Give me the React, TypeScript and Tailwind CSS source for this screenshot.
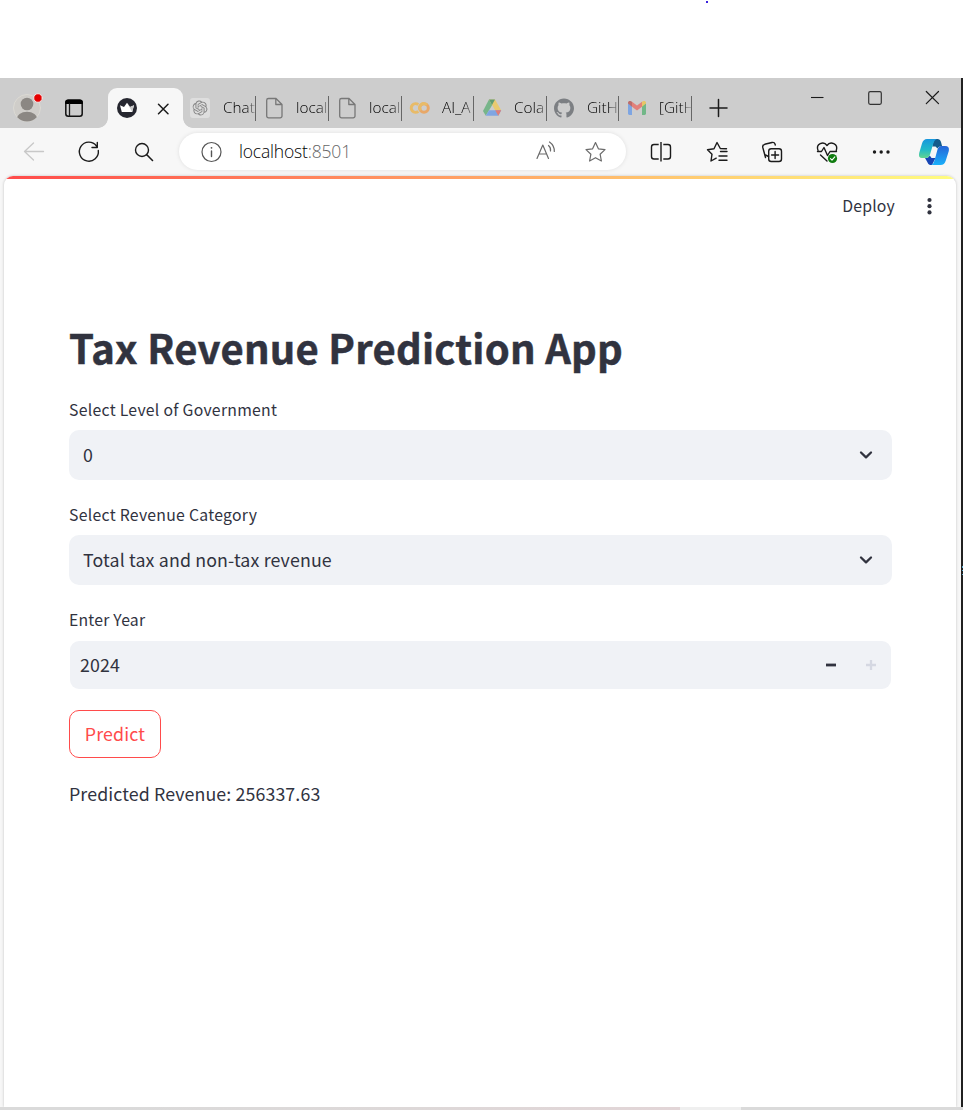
import type { ReactNode } from "react";

const SOURCE = "font-['Noto_Sans_CJK_SC','Noto_Sans',sans-serif]";
const CHROME = "font-['Open_Sans','Noto_Sans',sans-serif]";

/* Drawings share the window's coordinate system: x and y are the cell's origin. */
function Cell({ x, y, w, h, children }: { x: number; y: number; w: number; h: number; children: ReactNode }) {
  return (
    <svg
      width={w}
      height={h}
      viewBox={`${x} ${y} ${w} ${h}`}
      fill="none"
      stroke="#1b1b1b"
      strokeWidth="1.4"
      strokeLinecap="round"
      strokeLinejoin="round"
      className="block shrink-0"
    >
      {children}
    </svg>
  );
}

const Strip = ({ x, w, children }: { x: number; w: number; children: ReactNode }) => (
  <Cell x={x} y={78} w={w} h={50}>{children}</Cell>
);
const Tool = ({ x, w, children }: { x: number; w: number; children: ReactNode }) => (
  <Cell x={x} y={128} w={w} h={48}>{children}</Cell>
);

function Tab({ label, wide, children }: { label: string; wide?: boolean; children: ReactNode }) {
  return (
    <div className={`flex h-[50px] shrink-0 items-center ${wide ? "w-[73px]" : "w-[72px]"}`}>
      {children}
      <div className="mt-[11px] flex h-[25px] min-w-0 flex-1 items-center overflow-hidden border-r border-[#666] pb-[2px] pl-[8px]">
        <span className="block w-full whitespace-nowrap bg-[linear-gradient(90deg,#000_70%,#888_100%)] bg-clip-text text-[15.3px] leading-[23px] font-light text-transparent">
          {label}
        </span>
      </div>
    </div>
  );
}

function PageIcon() {
  return (
    <Cell x={-1.5} y={0} w={32} h={50}>
      <path d="M11 20.500h7.500l6 6V38a1.800 1.800 0 0 1-1.800 1.800H11A1.800 1.800 0 0 1 9.200 38V22.300A1.800 1.800 0 0 1 11 20.500ZM18.300 20.800V26.500h6" stroke="#777" strokeWidth="1.300" />
    </Cell>
  );
}

function TabStrip() {
  return (
    <div className="flex h-[50px] bg-[#cdcdcd]">
      <Strip x={0} w={54}>
        <clipPath id="face"><circle cx="27" cy="108" r="13.500" /></clipPath>
        <circle cx="27" cy="108" r="13.500" fill="#cfcdc9" stroke="#dcdad4" strokeWidth="1" />
        <g clipPath="url(#face)" fill="#8b8783" stroke="none">
          <circle cx="27" cy="104" r="6.300" />
          <ellipse cx="27" cy="119.500" rx="10.500" ry="7.700" />
        </g>
        <circle cx="38" cy="98" r="4.300" fill="#e60000" stroke="#f4e4e4" strokeWidth="1" />
      </Strip>
      <Strip x={54} w={54}>
        <rect x="65.800" y="100.200" width="16.400" height="16" rx="2.500" strokeWidth="1.500" stroke="#111" />
        <path d="M65.800 103.500V102.500Q65.800 100 68.300 100H79.700Q82.200 100 82.200 102.500V103.500Z" fill="#000" stroke="#000" strokeWidth="1.200" />
        <path d="M69.500 104V116" strokeWidth="1.300" />
      </Strip>
      <div className="relative mt-[10px] h-[40px] w-[75px] shrink-0 rounded-t-[9px] bg-[#f7f7f7]">
        <span className="absolute bottom-0 -left-[10px] size-[10px] bg-[radial-gradient(circle_at_0_0,transparent_9.500px,#f7f7f7_10.200px)]" />
        <span className="absolute -right-[10px] bottom-0 size-[10px] bg-[radial-gradient(circle_at_100%_0,transparent_9.500px,#f7f7f7_10.200px)]" />
        <Cell x={108} y={88} w={75} h={40}>
          <circle cx="127" cy="108" r="10" fill="#262730" stroke="none" />
          <path d="M120 105.200L124 107L127 102.800L130 107L134 105.200L132.200 112H121.800Z" fill="#fff" stroke="none" />
          <path d="M127 102.800L130 107L134 105.200L132.200 112Z" fill="#c9c9c9" stroke="none" />
          <path d="M158.500 104.300L168 113.700M168 104.300L158.500 113.700" strokeWidth="1.500" />
        </Cell>
      </div>
      <div className={`flex ${CHROME}`}>
        <Tab label="Chat" wide>
          <Cell x={183} y={78} w={32} h={50}>
            <rect x="190" y="98" width="20" height="20" rx="3" fill="#dedede" stroke="none" />
            <g transform="translate(192.500 100.500) scale(.625)" fill="#858585" stroke="none">
              <path d="M22.2819 9.8211a5.9847 5.9847 0 0 0-.5157-4.9108 6.0462 6.0462 0 0 0-6.5098-2.9A6.0651 6.0651 0 0 0 4.9807 4.1818a5.9847 5.9847 0 0 0-3.9977 2.9 6.0462 6.0462 0 0 0 .7427 7.0966 5.98 5.98 0 0 0 .511 4.9107 6.051 6.051 0 0 0 6.5146 2.9001A5.9847 5.9847 0 0 0 13.2599 24a6.0557 6.0557 0 0 0 5.7718-4.2058 5.9894 5.9894 0 0 0 3.9977-2.9001 6.0557 6.0557 0 0 0-.7475-7.0729zm-9.022 12.6081a4.4755 4.4755 0 0 1-2.8764-1.0408l.1419-.0804 4.7783-2.7582a.7948.7948 0 0 0 .3927-.6813v-6.7369l2.02 1.1686a.071.071 0 0 1 .038.052v5.5826a4.504 4.504 0 0 1-4.4945 4.4944zm-9.6607-4.1254a4.4708 4.4708 0 0 1-.5346-3.0137l.142.0852 4.783 2.7582a.7712.7712 0 0 0 .7806 0l5.8428-3.3685v2.3324a.0804.0804 0 0 1-.0332.0615L9.74 19.9502a4.4992 4.4992 0 0 1-6.1408-1.6464zM2.3408 7.8956a4.485 4.485 0 0 1 2.3655-1.9728V11.6a.7664.7664 0 0 0 .3879.6765l5.8144 3.3543-2.0201 1.1685a.0757.0757 0 0 1-.071 0l-4.8303-2.7865A4.504 4.504 0 0 1 2.3408 7.872zm16.5963 3.8558L13.1038 8.364 15.1192 7.2a.0757.0757 0 0 1 .071 0l4.8303 2.7913a4.4944 4.4944 0 0 1-.6765 8.1042v-5.6772a.79.79 0 0 0-.407-.667zm2.0107-3.0231l-.142-.0852-4.7735-2.7818a.7759.7759 0 0 0-.7854 0L9.409 9.2297V6.8974a.0662.0662 0 0 1 .0284-.0615l4.8303-2.7866a4.4992 4.4992 0 0 1 6.6802 4.66zM8.3065 12.863l-2.02-1.1638a.0804.0804 0 0 1-.038-.0567V6.0742a4.4992 4.4992 0 0 1 7.3757-3.4537l-.142.0805L8.704 5.459a.7948.7948 0 0 0-.3927.6813zm1.0976-2.3654l2.602-1.4998 2.6069 1.4998v2.9994l-2.5974 1.4997-2.6067-1.4997Z" />
            </g>
          </Cell>
        </Tab>
        <Tab label="local" wide><PageIcon /></Tab>
        <Tab label="local" wide><PageIcon /></Tab>
        <Tab label="AI_A">
          <Cell x={402} y={78} w={32} h={50}>
            <circle cx="424" cy="108" r="4.300" stroke="#e8a868" strokeWidth="3" />
            <path d="M418.300 104.700A4.300 4.300 0 1 0 418.300 111.300" stroke="#e8bb68" strokeWidth="3" strokeLinecap="butt" />
            <path d="M420.500 110.500A4.300 4.300 0 0 1 427 104.900" stroke="#e8bb68" strokeWidth="3" strokeLinecap="butt" />
          </Cell>
        </Tab>
        <Tab label="Cola" wide>
          <Cell x={474} y={78} w={32} h={50}>
            <g stroke="none">
              <path d="M489 99.500L492.200 105L485.800 115.800L483 111Z" fill="#77b58a" />
              <path d="M489 99.500H495L501.200 110.300H495.200Z" fill="#e9ca70" />
              <path d="M485.800 115.800L489 110.300H501.200L498.300 115.800Z" fill="#7fa5e2" />
              <path d="M495.200 110.300H501.200L498.300 115.800Z" fill="#df7d76" />
              <path d="M489 99.500H495L492 105Z" fill="#5e9c72" />
            </g>
          </Cell>
        </Tab>
        <Tab label="GitH">
          <Cell x={547} y={78} w={32} h={50}>
            <path transform="translate(554 98) scale(.833)" stroke="none" fill="#7c7f83" d="M12 .5C5.370.5 0 5.780 0 12.292c0 5.211 3.438 9.630 8.205 11.188.600.111.820-.254.820-.567 0-.280-.010-1.022-.015-2.005-3.338.711-4.042-1.582-4.042-1.582-.546-1.361-1.335-1.725-1.335-1.725-1.087-.731.084-.716.084-.716 1.205.082 1.838 1.215 1.838 1.215 1.070 1.803 2.809 1.282 3.495.981.108-.763.417-1.282.760-1.577-2.665-.295-5.466-1.309-5.466-5.827 0-1.287.465-2.339 1.235-3.164-.135-.298-.540-1.497.105-3.121 0 0 1.005-.316 3.300 1.209.960-.262 1.980-.392 3-.398 1.020.006 2.040.136 3 .398 2.280-1.525 3.285-1.209 3.285-1.209.645 1.624.240 2.823.120 3.121.765.825 1.230 1.877 1.230 3.164 0 4.530-2.805 5.527-5.475 5.817.420.354.810 1.077.810 2.182 0 1.578-.015 2.846-.015 3.229 0 .309.210.678.825.560C20.565 21.917 24 17.495 24 12.292 24 5.780 18.627.5 12 .5z" />
          </Cell>
        </Tab>
        <Tab label="[GitH" wide>
          <Cell x={619} y={78} w={32} h={50}>
            <g stroke="none">
              <path d="M628 103L632 106V115H629.400Q628 115 628 113.600Z" fill="#7ea5e2" />
              <path d="M642 106L646 103V113.600Q646 115 644.600 115H642Z" fill="#72b788" />
              <path d="M632 101.800L637 105.500L642 101.800V106.800L637 110.500L632 106.800Z" fill="#e2807a" />
              <path d="M628 103.500V102.800C628 100.800 630 100.700 631 101.200L632 101.800V106.800Z" fill="#bd6c69" />
              <path d="M646 103.500V102.800C646 100.800 644 100.700 643 101.200L642 101.800V106.800Z" fill="#e8c566" />
            </g>
          </Cell>
        </Tab>
      </div>
      <Strip x={692} w={108}>
        <path d="M710 108H727M718.500 99.500V116.500" strokeWidth="1.500" />
      </Strip>
      <Strip x={800} w={161}>
        <path d="M811 97.500H823.500" strokeWidth="1.100" strokeLinecap="butt" />
        <rect x="868.700" y="91.700" width="12.600" height="12.600" rx="1.500" stroke="#333" strokeWidth="1.200" />
        <path d="M926.300 91.500L938.500 103.700M938.500 91.500L926.300 103.700" strokeWidth="1.200" />
      </Strip>
    </div>
  );
}

const STAR = "M595.500 142.500L598.400 148.800L605 149.600L600.100 154.200L601.400 161L595.500 157.700L589.600 161L590.900 154.200L586 149.600L592.600 148.800Z";

function Toolbar() {
  return (
    <div className="flex h-[48px] bg-[#f7f7f7]">
      <Tool x={0} w={179}>
        <path d="M43.500 151.500H24.500M33.500 143L24.500 151.500L33.500 160" stroke="#c8c8c8" strokeWidth="1.300" />
        <path d="M96.500 146A9.500 9.500 0 1 0 98.300 150.500M97.300 142.500V147.500H92" />
        <circle cx="142" cy="150" r="6.500" />
        <path d="M146.800 154.800L152.500 160.500" strokeWidth="1.600" />
      </Tool>
      <div className="mt-[5px] flex h-[37px] w-[447px] shrink-0 items-center rounded-full bg-white shadow-[0_0_4px_rgba(0,0,0,0.1)]">
        <Cell x={179} y={133} w={60} h={37}>
          <circle cx="211.500" cy="152" r="9.500" stroke="#555" strokeWidth="1.200" />
          <path d="M211.500 151V156.500" stroke="#555" strokeWidth="1.400" />
          <circle cx="211.500" cy="147.800" r=".9" fill="#555" stroke="none" />
        </Cell>
        <div className={`w-[290px] pb-px whitespace-nowrap text-[17.500px] leading-[24px] font-light tracking-[-0.180px] text-black ${CHROME}`}>
          localhost<span className="text-[#666]">:8501</span>
        </div>
        <Cell x={529} y={133} w={97} h={37}>
          <g stroke="#6b6b6b" strokeWidth="1.200">
            <path d="M537 158.500L542.800 145L548.500 158.500M539 154H546.600" />
            <path d="M548.500 145.500Q551 147.500 550.500 151M549.500 142Q554.500 145.500 554.300 151.500" />
            <path d={STAR} />
          </g>
        </Cell>
      </div>
      <Tool x={626} w={335}>
        <path d="M658.700 144.500H654Q651.500 144.500 651.500 147V156.500Q651.500 159 654 159H658.700M663.300 144.500H668Q670.500 144.500 670.500 147V156.500Q670.500 159 668 159H663.300M661 142V161.500" strokeLinecap="butt" />
        <path d="M726.500 148.700L720.300 148.500L717 142.500L714 148.700L707.500 149.700L712 154.200L711 161L716.200 158.200M720.500 151.500H727M719 156H727M719 160.200H727" />
        <path d="M765.500 157.500L762.800 147.500Q762.200 145 764.700 144.300L772 142.500Q774.300 142 775 144L775.300 145" />
        <path d="M768.500 156.500L765.500 155" />
        <rect x="768.700" y="148.700" width="12.800" height="12.800" rx="2.500" />
        <path d="M775.100 151.500V158.500M771.600 155H778.600" />
        <path d="M818 150.500C815.500 144 823.500 140.500 827 145.500C830.500 140.500 838.500 144 836.300 150.500M817.500 151.500H821.500L824 147.500L827.500 155.500L830 151.500H836.500M820.500 155L827 161" strokeWidth="1.400" />
        <circle cx="832.500" cy="158.500" r="4.600" fill="#107c10" stroke="none" />
        <path d="M830.500 158.700L832 160.200L834.800 156.900" stroke="#fff" strokeWidth="1.100" />
        <g fill="#1b1b1b" stroke="none">
          <circle cx="874.500" cy="152" r="1.700" />
          <circle cx="881.200" cy="152" r="1.700" />
          <circle cx="888" cy="152" r="1.700" />
        </g>
        <defs>
          <linearGradient id="teal" x1="0" y1="0" x2="0" y2="1"><stop offset="0" stopColor="#1896dd" /><stop offset=".55" stopColor="#20b9c9" /><stop offset="1" stopColor="#62d58f" /></linearGradient>
          <linearGradient id="blue" x1="0" y1="0" x2="0" y2="1"><stop offset="0" stopColor="#2565d8" /><stop offset="1" stopColor="#1ab0fa" /></linearGradient>
        </defs>
        <g stroke="none">
          <path d="M934 139H937.500Q940 139 941 142L942.200 146.500H940Q938.500 146.500 937.500 148.500L935.500 146.500H932.200Z" fill="#155b8c" />
          <path d="M925 158Q928.500 158 929.800 155.500L931.500 158H935.500L932 165H930Q928 164.500 927 161.500Z" fill="#1745b5" />
          <path d="M927 139H937Q934.500 139.500 933.300 143.500L930 154.500Q929 158 925.500 158H922Q918 158 919.200 153L922 143.500Q923.300 139 927 139Z" fill="url(#teal)" />
          <path d="M941.500 146H945Q949.800 146 948.800 151L945.800 160.500Q944.500 165 940.500 165H931Q933.300 164.500 934.500 160.500L937.500 149.500Q938.600 146 941.500 146Z" fill="url(#blue)" />
        </g>
      </Tool>
    </div>
  );
}

function SelectField({ label, value }: { label: string; value: string }) {
  return (
    <div className="h-[105px]">
      <div className="h-[30px] text-[15.800px] leading-[20px] tracking-[0.270px]">{label}</div>
      <div className="flex h-[50px] items-center justify-between rounded-[10px] bg-[#f0f2f6] pr-[18px] pb-[2px] pl-[14px]">
        <span className="text-[17.800px] leading-[26px] tracking-[0.150px]">{value}</span>
        <svg width="16" height="16" viewBox="0 -1 16 16" fill="none" className="block">
          <path d="M3 5.500L8 10.300L13 5.500" stroke="#31333f" strokeWidth="2.300" strokeLinecap="round" strokeLinejoin="round" />
        </svg>
      </div>
    </div>
  );
}

function StreamlitPage() {
  return (
    <div className={`ml-[4px] h-[931px] w-[952px] overflow-hidden rounded-t-[9px] bg-white text-[#31333f] shadow-[0_0_3px_rgba(0,0,0,0.22)] ${SOURCE}`}>
      <div className="h-[3px] bg-[linear-gradient(90deg,#ff4b4b,#fffd80)]" />
      <header className="flex h-[54px] items-center justify-end pr-[23px]">
        <span className="mr-[30px] text-[15.800px] leading-[20px] tracking-[0.200px]">Deploy</span>
        <svg width="8" height="20" viewBox="0 0 8 20" fill="#31333f" className="block">
          <circle cx="4.500" cy="4" r="2.100" /><circle cx="4.500" cy="10.200" r="2.100" /><circle cx="4.500" cy="16.400" r="2.100" />
        </svg>
      </header>
      <main className="pt-[84px] pr-[64px] pl-[65px]">
        <h1 className="h-[83px] whitespace-nowrap text-[40px] leading-[60px] font-bold tracking-[0.240px] [-webkit-text-stroke:0.5px_#31333f]">Tax Revenue Prediction App</h1>
        <SelectField label="Select Level of Government" value="0" />
        <SelectField label="Select Revenue Category" value="Total tax and non-tax revenue" />
        <div className="h-[100px]">
          <div className="h-[31px] text-[15.800px] leading-[20px] tracking-[0.200px]">Enter Year</div>
          <div className="mx-[1px] flex h-[48px] items-center justify-between rounded-[9px] bg-[#f0f2f6] pl-[10px]">
            <span className="pb-[2px] text-[17.800px] leading-[26px] tracking-[0.150px]">2024</span>
            <svg width="80" height="48" viewBox="811 641 80 48" fill="none" className="block">
              <path d="M826 665H836" stroke="#31333f" strokeWidth="2.800" />
              <path d="M866 665H876M871 660V670" stroke="#d5d8e2" strokeWidth="2.300" />
            </svg>
          </div>
        </div>
        <button className="block h-[48px] w-[92px] rounded-[10px] border border-[#ff4b4b] pb-[2px] text-[17.800px] leading-[26px] tracking-[0.150px] text-[#ff4b4b]">Predict</button>
        <p className="mt-[22px] text-[17.800px] leading-[26px] tracking-[0.110px]">Predicted Revenue: 256337.63</p>
      </main>
    </div>
  );
}

export default function App() {
  return (
    <div className="h-[1110px] w-[963px] overflow-hidden bg-white">
      <div className="flex h-[78px] pl-[706px]"><span className="mt-[1px] size-[2px] bg-[#3a22dd]" /></div>
      <div className="flex h-[1029px]">
        <div className="h-full w-[961px] overflow-hidden bg-[#f7f7f7]">
          <TabStrip />
          <Toolbar />
          <StreamlitPage />
        </div>
        <div className="h-full w-[2px] bg-[#202020] pt-[488px]">
          <div className="ml-px h-[2px] bg-[#5aa9cf]" />
          <div className="mt-[2px] ml-px h-[1px] bg-[#5aa9cf]" />
          <div className="mt-[3px] ml-px h-[1px] bg-[#5aa9cf]" />
        </div>
      </div>
      <div className="flex h-[3px] bg-[#dadada]">
        <div className="w-[680px] bg-[linear-gradient(90deg,#dadada_0_15%,#ddd8d8_60%,#e2d5d7)]" />
        <div className="w-[61px] bg-[#efefef]" />
      </div>
    </div>
  );
}
